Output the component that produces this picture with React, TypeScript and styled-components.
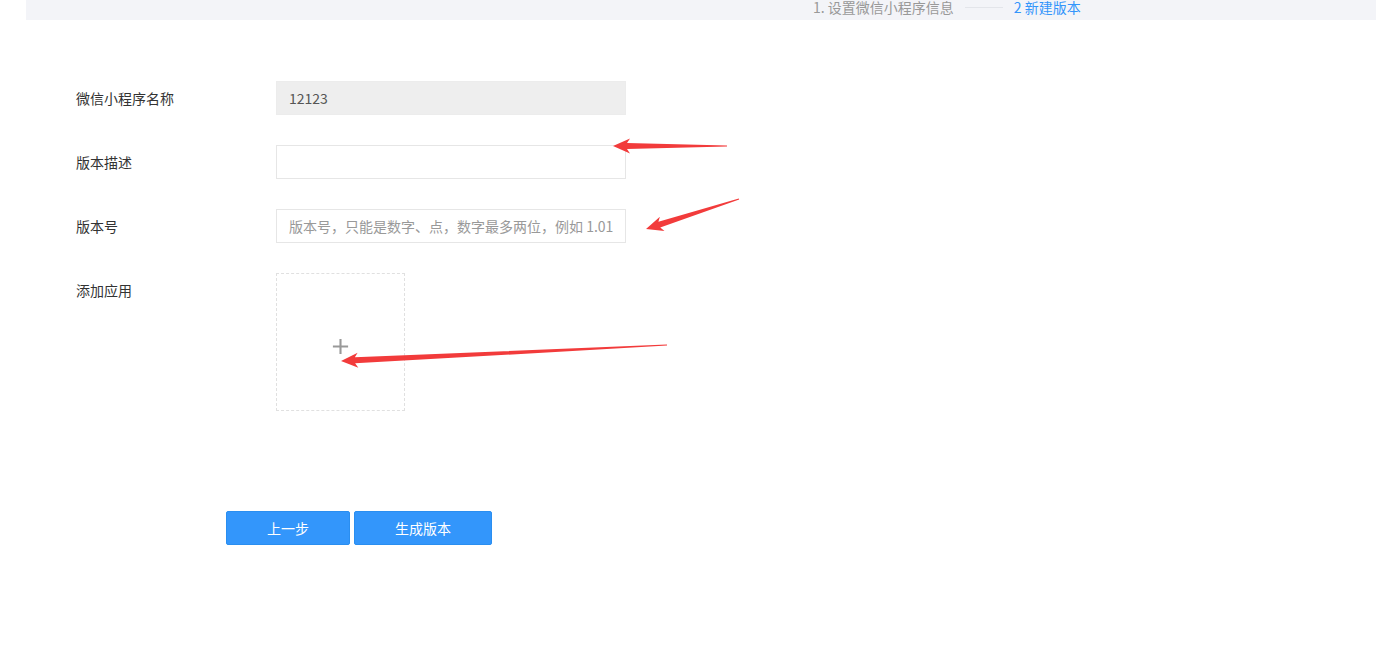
import styled, { createGlobalStyle } from 'styled-components';

const GlobalStyle = createGlobalStyle`
	body {
		margin: 0;
		background: #fff;
		font-family: 'Noto Sans CJK SC', 'Noto Sans', sans-serif;
		color: #333;
	}
`;

type Pt = [number, number];

// tapered annotation arrow, tip first then tail
function arrowPoints(tip: Pt, tail: Pt) {
	const dx = tail[0] - tip[0];
	const dy = tail[1] - tip[1];
	const len = Math.hypot(dx, dy);
	const ux = dx / len;
	const uy = dy / len;
	const nx = -uy;
	const ny = ux;
	const headLen = 17;
	const headW = 7.5;
	const shaftW = 3;
	const bx = tip[0] + ux * headLen;
	const by = tip[1] + uy * headLen;
	const pts: Pt[] = [
		tip,
		[bx + nx * headW, by + ny * headW],
		[bx - ux * 3 + nx * shaftW, by - uy * 3 + ny * shaftW],
		[tail[0] + nx * 0.6, tail[1] + ny * 0.6],
		[tail[0] - nx * 0.6, tail[1] - ny * 0.6],
		[bx - ux * 3 - nx * shaftW, by - uy * 3 - ny * shaftW],
		[bx - nx * headW, by - ny * headW],
	];
	return pts.map(p => p.join(',')).join(' ');
}

const arrows: [Pt, Pt][] = [
	[[613, 146], [727, 146]],
	[[646, 229], [739, 199]],
	[[341, 361], [667, 345]],
];

export default function App() {
	return (
		<Page>
			<GlobalStyle />
			<Header>
				<Steps>
					<Step>1. 设置微信小程序信息</Step>
					<StepLine />
					<Step $active>2 新建版本</Step>
				</Steps>
			</Header>

			<Form>
				<Row>
					<Label>微信小程序名称</Label>
					<Input value="12123" disabled readOnly $disabled />
				</Row>
				<Row>
					<Label>版本描述</Label>
					<Input />
				</Row>
				<Row>
					<Label>版本号</Label>
					<Input placeholder="版本号，只能是数字、点，数字最多两位，例如 1.01" />
				</Row>
				<Row>
					<Label>添加应用</Label>
					<Upload>
						<PlusIcon viewBox="0 0 20 20">
							<path d="M10 2v16M2 10h16" stroke="#999" strokeWidth="2.2" />
						</PlusIcon>
					</Upload>
				</Row>
			</Form>

			<Buttons>
				<Button $w={124}>上一步</Button>
				<Button $w={138}>生成版本</Button>
			</Buttons>

			<Overlay width="1376" height="670">
				{arrows.map(([tip, tail], i) => (
					<polygon key={i} points={arrowPoints(tip, tail)} fill="#f23b3b" />
				))}
			</Overlay>
		</Page>
	);
}

const Page = styled.div`
	position: relative;
	min-height: 670px;
	overflow: hidden;
`;

const Header = styled.div`
	margin-left: 26px;
	height: 20px;
	background: #f3f4f8;
	display: flex;
	padding-left: 787px;
`;

const Steps = styled.div`
	display: flex;
	align-items: center;
	height: 14px;
	gap: 11px;
`;

const Step = styled.span<{ $active?: boolean }>`
	font-size: 14px;
	line-height: 14px;
	color: ${p => (p.$active ? '#3396fb' : '#999')};
`;

const StepLine = styled.span`
	width: 38px;
	height: 1px;
	background: #e3e5ea;
`;

const Form = styled.div`
	margin-top: 61px;
	padding-left: 76px;
	display: flex;
	flex-direction: column;
	gap: 30px;
`;

const Row = styled.div`
	display: grid;
	grid-template-columns: 200px 350px;
	align-items: start;
`;

const Label = styled.div`
	font-size: 14px;
	line-height: 34px;
	color: #333;
`;

const Input = styled.input<{ $disabled?: boolean }>`
	box-sizing: border-box;
	width: 350px;
	height: 34px;
	padding: 0 12px;
	border: 1px solid ${p => (p.$disabled ? '#ececec' : '#e6e6e6')};
	background: ${p => (p.$disabled ? '#eeeeee' : '#fff')};
	font-family: 'Noto Sans CJK SC', 'Noto Sans', sans-serif;
	font-size: 14px;
	color: #555;
	outline: none;
	&::placeholder {
		color: #999;
		font-size: 14px;
	}
	&:disabled {
		-webkit-text-fill-color: #555;
		opacity: 1;
	}
`;

const Upload = styled.div`
	box-sizing: border-box;
	width: 129px;
	height: 138px;
	border: 1px dashed #e0e0e0;
	display: flex;
	align-items: center;
	justify-content: center;
`;

const PlusIcon = styled.svg`
	width: 19px;
	height: 19px;
	margin-top: 8px;
`;

const Buttons = styled.div`
	margin-top: 100px;
	padding-left: 226px;
	display: flex;
	gap: 4px;
`;

const Button = styled.button<{ $w: number }>`
	box-sizing: border-box;
	width: ${p => p.$w}px;
	height: 34px;
	background: #3396fb;
	border: 1px solid #2a8ef0;
	border-radius: 2px;
	color: #fff;
	font-family: 'Noto Sans CJK SC', 'Noto Sans', sans-serif;
	font-size: 14px;
	cursor: pointer;
`;

const Overlay = styled.svg`
	position: absolute;
	left: 0;
	top: 0;
	pointer-events: none;
`;
